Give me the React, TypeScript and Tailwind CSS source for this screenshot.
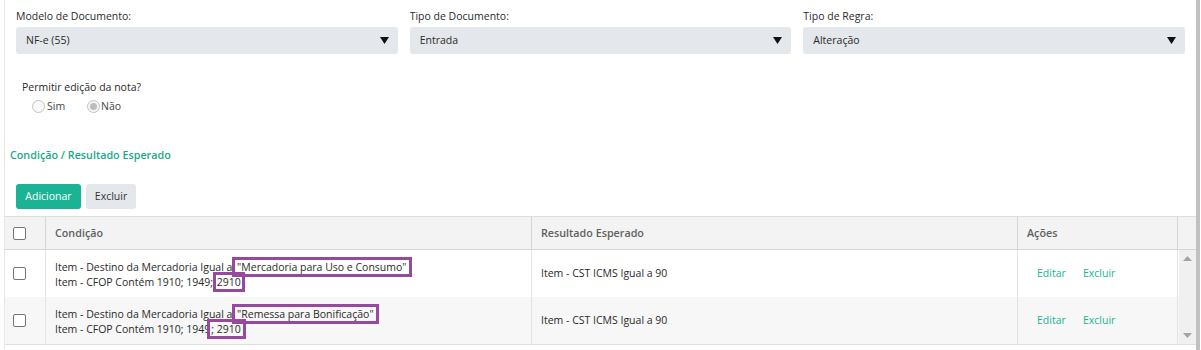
import React from 'react'

const selects = [
  { label: 'Modelo de Documento:', value: 'NF-e (55)' },
  { label: 'Tipo de Documento:', value: 'Entrada' },
  { label: 'Tipo de Regra:', value: 'Alteração' },
]

function Arrow() {
  return (
    <svg width="9" height="7" viewBox="0 0 9 7" className="shrink-0">
      <path d="M0 0 L9 0 L4.5 7 Z" fill="#111" />
    </svg>
  )
}

function Check() {
  return <span className="block w-[13px] h-[13px] rounded-[2px] border border-[#767676] bg-white" />
}

function Mark({ children, className = '' }: { children: React.ReactNode; className?: string }) {
  return (
    <span className={`outline-[3px] outline outline-[#954a9e] outline-offset-0 ${className}`}>{children}</span>
  )
}

const rows = [
  {
    first: (
      <>
        Item - Destino da Mercadoria Igual a <Mark className="px-[2px]">"Mercadoria para Uso e Consumo"</Mark>
      </>
    ),
    second: (
      <>
        Item - CFOP Contém 1910; 1949; <Mark className="px-[1px]">2910</Mark>
      </>
    ),
    bg: 'bg-white',
  },
  {
    first: (
      <>
        Item - Destino da Mercadoria Igual a <Mark className="px-[2px]">"Remessa para Bonificação"</Mark>
      </>
    ),
    second: (
      <>
        Item - CFOP Contém 1910; 1949<Mark className="pl-[1px] pr-[2px]">; 2910</Mark>
      </>
    ),
    bg: 'bg-[#f7f7f7]',
  },
]

export default function App() {
  return (
    <div className="flex h-[350px] bg-white font-['Open_Sans',sans-serif] text-[10.5px] text-[#2a2a2a]">
      <div className="ml-[4px] flex-1 border-l border-[#e6e6e6] flex flex-col">
        <div className="grid grid-cols-3 gap-x-[12px] pl-[11px] pr-[11px] pt-[8px]">
          {selects.map((s) => (
            <div key={s.label}>
              <div className="leading-[16px] mb-[3px]">{s.label}</div>
              <div className="h-[27px] rounded-[3px] bg-[#e4e7eb] flex items-center justify-between pl-[10px] pr-[9px]">
                <span>{s.value}</span>
                <Arrow />
              </div>
            </div>
          ))}
        </div>

        <div className="pl-[17px] mt-[25px] leading-[16px]">Permitir edição da nota?</div>
        <div className="pl-[27px] mt-[3px] flex items-center leading-[16px]">
          <label className="w-[55px] flex items-center">
            <span className="w-[13px] h-[13px] rounded-full border border-[#c4c4c4] bg-[#f9f9f9]" />
            <span className="ml-[2px] text-[#444]">Sim</span>
          </label>
          <label className="flex items-center">
            <span className="w-[13px] h-[13px] rounded-full border border-[#c4c4c4] bg-[#f5f5f5] flex items-center justify-center">
              <span className="w-[7px] h-[7px] rounded-full bg-[#bdbdbd]" />
            </span>
            <span className="ml-[1px] text-[#444]">Não</span>
          </label>
        </div>

        <div className="pl-[5px] mt-[33px] leading-[16px] text-[10.75px] font-semibold text-[#1aa88a]">Condição / Resultado Esperado</div>

        <div className="pl-[11px] mt-[21px] flex gap-[5px]">
          <button className="h-[25px] w-[65px] rounded-[3px] bg-[#1ab394] text-white">Adicionar</button>
          <button className="h-[25px] w-[50px] rounded-[3px] bg-[#e4e7eb] text-[#333]">Excluir</button>
        </div>

        <div className="mt-[7px] border-t border-b border-[#dedede]">
          <div className="flex h-[33px] bg-[#f3f3f3] border-b border-[#d6d6d6] font-semibold text-[10.75px] text-[#5f6163]">
            <div className="w-[41px] flex items-center pl-[8px] border-r border-[#d6d6d6]">
              <Check />
            </div>
            <div className="w-[486px] flex items-center pl-[9px] border-r border-[#d6d6d6]">Condição</div>
            <div className="w-[486px] flex items-center pl-[9px] border-r border-[#d6d6d6]">Resultado Esperado</div>
            <div className="w-[160px] flex items-center pl-[9px] border-r border-[#d6d6d6]">Ações</div>
            <div className="flex-1" />
          </div>
          <div className="flex">
            <div className="flex-1">
              {rows.map((r, i) => (
                <div key={i} className={`flex h-[47px] ${r.bg}`}>
                  <div className="w-[41px] flex items-center pl-[8px] border-r border-[#e3e3e3]">
                    <Check />
                  </div>
                  <div className="w-[486px] flex flex-col justify-center pl-[9px] pt-[3px] leading-[15px] border-r border-[#e3e3e3]">
                    <div>{r.first}</div>
                    <div>{r.second}</div>
                  </div>
                  <div className="w-[486px] flex items-center pl-[9px] border-r border-[#e3e3e3]">Item - CST ICMS Igual a 90</div>
                  <div className="w-[160px] flex items-center pl-[19px] text-[#1ab394] border-r border-[#e3e3e3]">
                    <span className="w-[46px]">Editar</span>
                    <span>Excluir</span>
                  </div>
                </div>
              ))}
            </div>
            <div className="w-[17px] bg-[#f0f0f0] flex flex-col items-center justify-between py-[6px]">
              <svg width="9" height="5" viewBox="0 0 9 5"><path d="M0 5 L4.5 0 L9 5 Z" fill="#a3a3a3" /></svg>
              <svg width="9" height="5" viewBox="0 0 9 5"><path d="M0 0 L4.5 5 L9 0 Z" fill="#a3a3a3" /></svg>
            </div>
          </div>
        </div>
      </div>
      <div className="w-[4px] mr-[1px] bg-[#c1c1c1]" />
    </div>
  )
}
